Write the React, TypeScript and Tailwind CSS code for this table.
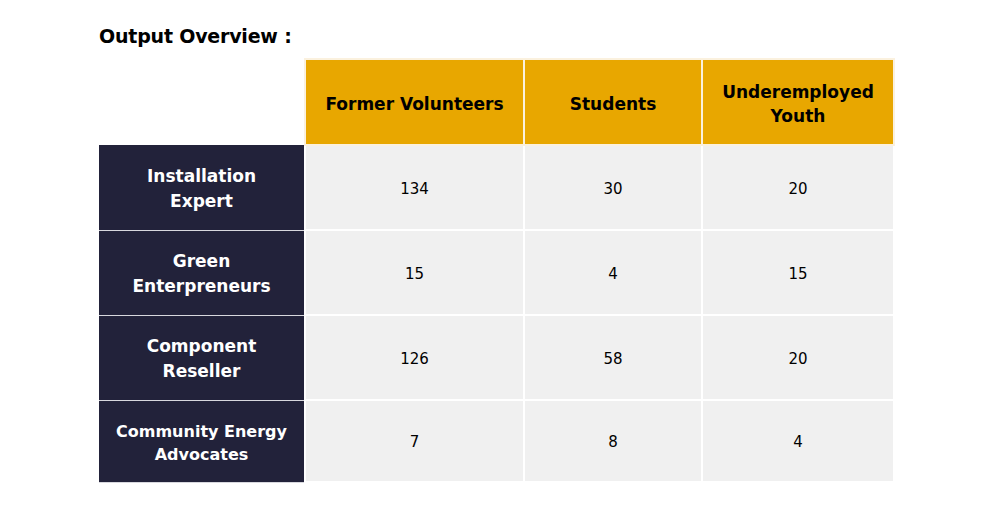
import React from "react";

const rows = [
  { label: ["Installation", "Expert"], vals: ["134", "30", "20"], small: false, h: "h-[85px]" },
  { label: ["Green", "Enterpreneurs"], vals: ["15", "4", "15"], small: false, h: "h-[85px]" },
  { label: ["Component", "Reseller"], vals: ["126", "58", "20"], small: false, h: "h-[85px]" },
  { label: ["Community Energy", "Advocates"], vals: ["7", "8", "4"], small: true, h: "h-[82px]" },
];

export default function App() {
  return (
    <div className="w-[994px] h-[512px] bg-white pl-[99px] pt-[23px]" style={{ fontFamily: '"DejaVu Sans", "Open Sans", sans-serif' }}>
      <h1 className="text-[19px] font-bold text-black leading-[26px] tracking-[-0.2px]">Output Overview :</h1>
      <table className="mt-[9px] border-collapse">
        <thead>
          <tr className="h-[86px]">
            <th className="w-[206px] p-0"></th>
            <th className="w-[219px] bg-[#e8a700] border-2 border-[#fbf1de] text-[17px] font-bold text-black leading-[24px] px-2 pt-[3px] pb-0">Former Volunteers</th>
            <th className="w-[178px] bg-[#e8a700] border-2 border-[#fbf1de] text-[17px] font-bold text-black leading-[24px] px-2 pt-[3px] pb-0">Students</th>
            <th className="w-[192px] bg-[#e8a700] border-2 border-[#fbf1de] text-[17px] font-bold text-black leading-[24px] px-2 pt-[3px] pb-0">
              Underemployed
              <br />
              Youth
            </th>
          </tr>
        </thead>
        <tbody>
          {rows.map((r, i) => (
            <tr key={i} className={r.h}>
              <td className="bg-[#22223a] border-r border-[#a3a3b2] border-b border-b-[#d8d8de] text-white font-bold text-center px-0 pt-[3px] pb-0">
                <div className={r.small ? "text-[16px] leading-[23px]" : "text-[17px] leading-[25px]"}>
                  {r.label[0]}
                  <br />
                  {r.label[1]}
                </div>
              </td>
              {r.vals.map((v, j) => (
                <td key={j} className="bg-[#f0f0f0] border-2 border-white text-center text-[15px] text-black px-0 pt-[3px] pb-0">
                  {v}
                </td>
              ))}
            </tr>
          ))}
        </tbody>
      </table>
    </div>
  );
}
